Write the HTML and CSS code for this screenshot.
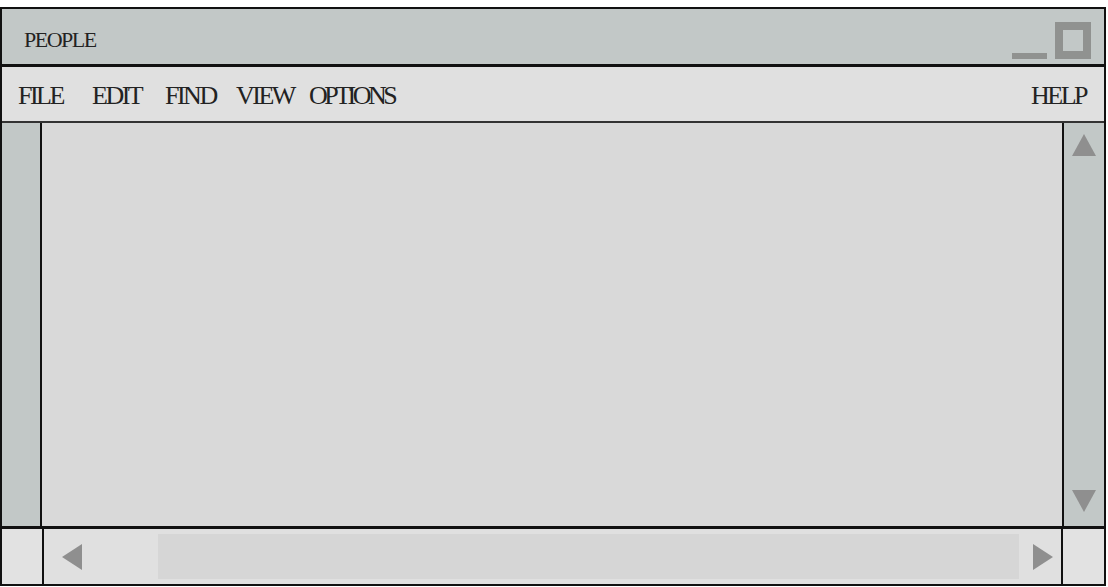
FILE: index.html
```html
<!DOCTYPE html>
<html>
<head>
<meta charset="utf-8">
<link rel="stylesheet" href="styles.css">
</head>
<body>
<div class="window">
  <div class="titlebar">
    <span class="title">PEOPLE</span>
    <div class="controls">
      <span class="min"></span>
      <span class="max"></span>
    </div>
  </div>
  <div class="menubar">
    <nav class="menu">
      <span>FILE</span>
      <span>EDIT</span>
      <span>FIND</span>
      <span>VIEW</span>
      <span class="tight">OPTIONS</span>
    </nav>
    <span class="help">HELP</span>
  </div>
  <div class="middle">
    <div class="side"></div>
    <div class="content"></div>
    <div class="vscroll">
      <svg class="arrow" width="24" height="22" viewBox="0 0 24 22"><polygon points="12,0 24,22 0,22" fill="#8f8f8f"/></svg>
      <svg class="arrow" width="24" height="22" viewBox="0 0 24 22"><polygon points="0,0 24,0 12,22" fill="#8f8f8f"/></svg>
    </div>
  </div>
  <div class="bottom">
    <div class="corner-left"></div>
    <div class="hscroll">
      <svg class="arrow" width="20" height="26" viewBox="0 0 20 26"><polygon points="20,0 20,26 0,13" fill="#8f8f8f"/></svg>
      <div class="thumb"></div>
      <svg class="arrow" width="20" height="26" viewBox="0 0 20 26"><polygon points="0,0 20,13 0,26" fill="#8f8f8f"/></svg>
    </div>
    <div class="corner-right"></div>
  </div>
</div>
</body>
</html>
```

FILE: styles.css
```css
* { box-sizing: border-box; }
html, body { margin: 0; padding: 0; background: #fff; }
body { padding-top: 7px; font-family: "Liberation Serif", "Times New Roman", serif; color: #222; }

.window {
  width: 1106px;
  height: 579px;
  border: 2px solid #111;
  display: flex;
  flex-direction: column;
}

.titlebar {
  height: 58px;
  background: #c2c8c7;
  border-bottom: 3px solid #111;
  display: flex;
  align-items: center;
  justify-content: space-between;
  padding: 0 13px 0 22px;
  flex: none;
}
.title {
  font-size: 22px;
  letter-spacing: -1.5px;
  padding-top: 6px;
}
.controls {
  display: flex;
  align-items: flex-end;
  gap: 8px;
  padding-top: 8px;
}
.min {
  width: 35px;
  height: 6px;
  background: #909290;
}
.max {
  width: 36px;
  height: 37px;
  border: 8px solid #909290;
  background: #c2c8c7;
}

.menubar {
  height: 56px;
  background: #e0e0e0;
  border-bottom: 2px solid #333;
  display: flex;
  align-items: center;
  justify-content: space-between;
  padding: 0 18px 0 16px;
  font-size: 26px;
  letter-spacing: -2.5px;
  flex: none;
}
.menu {
  display: grid;
  grid-template-columns: 74px 73px 71px 73px auto;
}
.menubar span { padding-top: 3px; }
.menubar .tight { letter-spacing: -3.5px; }

.middle {
  flex: 1;
  display: flex;
  min-height: 0;
}
.side {
  width: 40px;
  background: #c2c8c7;
  border-right: 2px solid #111;
  flex: none;
}
.content {
  flex: 1;
  background: #d9d9d9;
}
.vscroll {
  width: 42px;
  background: #c2c8c7;
  border-left: 2px solid #111;
  flex: none;
  display: flex;
  flex-direction: column;
  justify-content: space-between;
  align-items: center;
  padding: 11px 0 14px;
}
.arrow { display: block; }

.bottom {
  height: 58px;
  border-top: 3px solid #111;
  background: #e0e0e0;
  display: flex;
  flex: none;
}
.corner-left {
  width: 42px;
  border-right: 2px solid #111;
  background: #e2e2e2;
  flex: none;
}
.hscroll {
  flex: 1;
  display: flex;
  align-items: center;
  padding: 0 8px 0 18px;
}
.thumb {
  height: 45px;
  background: #d6d6d6;
  flex: 1;
  margin: 0 14px 0 76px;
}
.corner-right {
  width: 43px;
  border-left: 2px solid #111;
  background: #e2e2e2;
  flex: none;
}
```
